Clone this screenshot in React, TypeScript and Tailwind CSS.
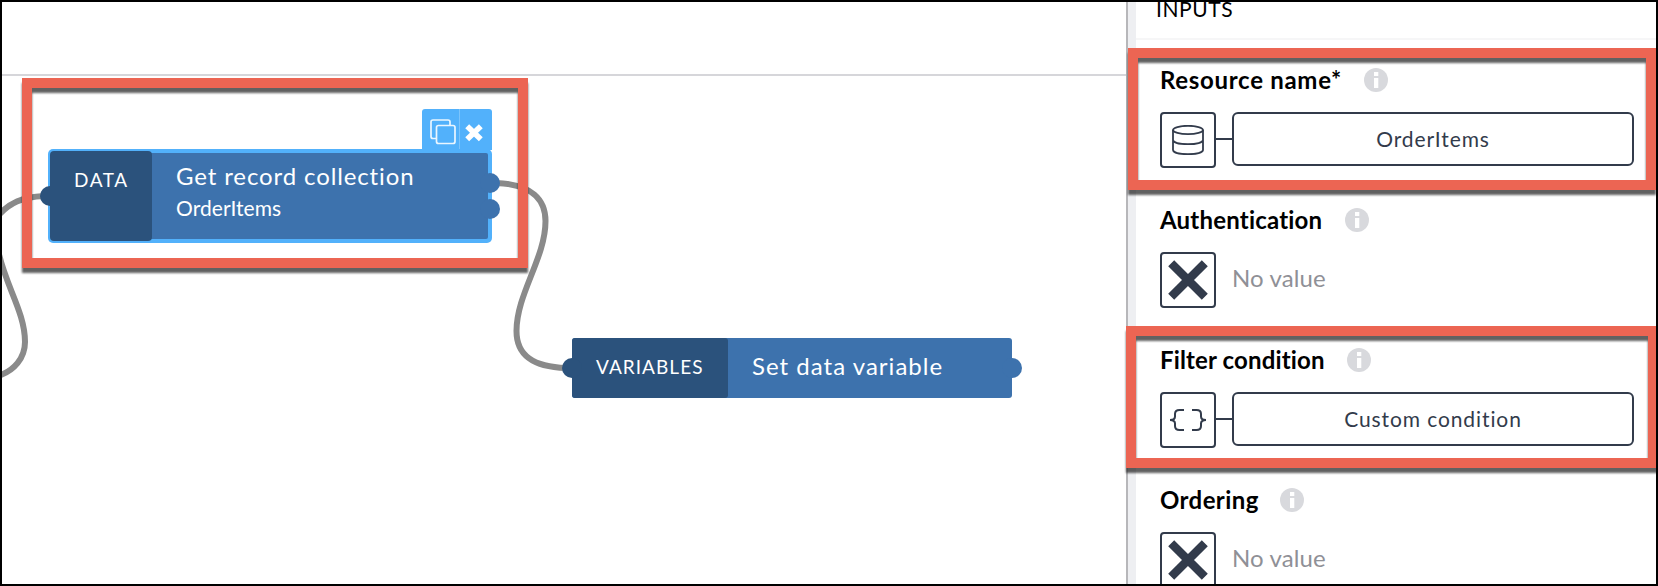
import type { ReactNode } from "react";

function Highlight({ className }: { className: string }) {
  return (
    <div
      className={`pointer-events-none absolute border-[10px] border-[#ec6553] [filter:drop-shadow(0_5.5px_1.3px_rgba(0,0,0,0.62))] ${className}`}
    />
  );
}

function Port({ className }: { className: string }) {
  return <span className={`absolute size-5 rounded-full ${className}`} />;
}

function InfoIcon() {
  return (
    <svg width="24" height="24" viewBox="0 0 24 24" className="shrink-0">
      <circle cx="12" cy="12" r="12" fill="#d8d9dd" />
      <path d="M10 4h4.300v4H10zM10 10h4.300v10H10z" fill="#fff" />
    </svg>
  );
}

function DatabaseIcon() {
  return (
    <svg width="32" height="30" viewBox="0 0 32 30" fill="none" stroke="#323b4b" strokeWidth="1.8">
      <ellipse cx="16" cy="5" rx="15" ry="4.2" />
      <path d="M1 5v20c0 2.500 6.500 4.200 15 4.200S31 27.500 31 25V5M1 15c0 2.500 6.500 4.200 15 4.200S31 17.500 31 15" />
    </svg>
  );
}

function BracesIcon() {
  return (
    <svg width="36" height="22" viewBox="0 0 36 22" fill="none" stroke="#323b4b" strokeWidth="2" className="shrink-0">
      <path d="M14 1h-4.500Q5 1 5 5v2.500Q5 11 0 11 5 11 5 14.500V17q0 4 4.500 4H14" />
      <path d="M22 1h4.500Q31 1 31 5v2.500Q31 11 36 11 31 11 31 14.500V17q0 4-4.500 4H22" />
    </svg>
  );
}

function CrossIcon() {
  return (
    <svg width="40" height="40" viewBox="0 0 40 40" stroke="#323b4b" strokeWidth="8.500">
      <path d="M3.200 3.200 36.800 36.800M36.800 3.200 3.200 36.800" />
    </svg>
  );
}

function CopyIcon() {
  return (
    <svg width="26" height="26" viewBox="0 0 26 26" fill="none" stroke="#eaf6ff" strokeWidth="1.700">
      <path d="M6 19.500H3q-2 0-2-2V3q0-2 2-2h15q2 0 2 2v3" />
      <rect x="6.500" y="6.500" width="18.500" height="18" rx="2" />
    </svg>
  );
}

function CloseIcon() {
  return (
    <svg width="18" height="18" viewBox="0 0 18 18" stroke="#fff" strokeWidth="5.600" strokeLinejoin="round">
      <path d="M2.200 2.200 15.800 15.200M15.800 2.200 2.200 15.200" />
    </svg>
  );
}

type FieldProps = { label: string; labelClass: string; icon: ReactNode; value?: string };

function Field({ label, labelClass, icon, value }: FieldProps) {
  return (
    <section className="h-[140px] shrink-0 pl-6 pr-[22px]">
      <div className="flex h-6 items-center">
        <h3 className={`whitespace-nowrap text-[24px] leading-6 font-bold text-black ${labelClass}`}>{label}</h3>
        <InfoIcon />
      </div>
      <div className="mt-5 flex">
        <div className="flex size-14 shrink-0 items-center justify-center rounded-[4px] border-2 border-[#323b4b]">
          {icon}
        </div>
        {value ? (
          <>
            <span className="mt-[26px] h-0.5 w-4 bg-[#323b4b]" />
            <button className="flex h-[54px] flex-1 items-center justify-center rounded-[6px] border-2 border-[#323b4b] bg-white pb-px text-[21px] tracking-[0.9px] text-[#323b4b]">
              {value}
            </button>
          </>
        ) : (
          <span className="ml-4 flex h-[51px] items-center text-[24px] tracking-[0.1px] text-[#8f9096]">No value</span>
        )}
      </div>
    </section>
  );
}

export default function App() {
  return (
    <div className="relative flex h-[586px] w-[1658px] overflow-hidden border-2 border-black bg-white font-['Lato',sans-serif]">
      <main className="relative w-[1124px] shrink-0">
        <div className="h-[74px] border-b-2 border-[#d6d6da]" />

        <svg className="absolute -left-0.5 -top-0.5" width="1126" height="584" fill="none" stroke="#8a8a8a" strokeWidth="6">
          <path d="M44 196C22 197 9 203-2 216" />
          <path d="M-2 250C5 285 25 312 25 342C25 358 14 371-2 376" />
          <path d="M496 183C532 184 545.500 200 545.500 221C545.500 258 516.500 294 516.500 331C516.500 356 534 367 566 368" />
        </svg>

        <div className="absolute left-[46px] top-[147px] flex h-[94px] w-[444px] rounded-[5px] bg-[#52b1fb] py-0.5 pl-0.5 pr-1 text-white">
          <div className="z-10 w-[102px] shrink-0 rounded-[4px] bg-[#2b527c] pl-6 pt-[17px] text-[19px] leading-6 tracking-[1.6px]">
            DATA
          </div>
          <div className="-ml-1 my-0.5 flex-1 rounded-r-[2px] bg-[#3d72ad] pl-7 pt-[7px]">
            <div className="text-[24px] leading-8 tracking-[0.88px]">Get record collection</div>
            <div className="mt-0.5 text-[21px] leading-7 tracking-[0.05px]">OrderItems</div>
          </div>
          <Port className="-left-2 top-[37px] bg-[#2b527c]" />
          <Port className="-right-2 top-[24px] bg-[#3d72ad]" />
          <Port className="-right-2 top-[50px] bg-[#3d72ad]" />
          <div className="absolute -top-10 right-0 flex h-[41px] w-[70px] rounded-t-[3px] bg-[#52b1fb]">
            <div className="h-10 w-[38px] border-r border-[#7cc4fc] pl-2 pt-[10px]">
              <CopyIcon />
            </div>
            <div className="pl-[5px] pt-[15px]">
              <CloseIcon />
            </div>
          </div>
        </div>

        <div className="absolute left-[570px] top-[336px] flex h-[60px] w-[440px] rounded-[3px] bg-[#3d72ad] text-white">
          <div className="flex w-[156px] shrink-0 items-center rounded-[3px] bg-[#2b527c] pb-px pl-6 text-[19px] tracking-[1.05px]">
            VARIABLES
          </div>
          <div className="flex items-center pb-[5px] pl-6 text-[24px] tracking-[1.02px]">Set data variable</div>
          <Port className="-left-2.5 top-5 bg-[#2b527c]" />
          <Port className="-right-2.5 top-5 bg-[#3d72ad]" />
        </div>
      </main>

      <aside className="flex flex-1 flex-col border-l-2 border-[#b7b7ba]">
        <div className="flex min-h-0 flex-1 flex-col overflow-hidden border-l-8 border-[#eeeff2]">
          <h2 className="h-[38px] shrink-0 border-b-2 border-[#f6f6f7] pl-5 text-[21px] leading-[14px] tracking-[0.6px] text-black">
            INPUTS
          </h2>
          <div className="flex flex-col pt-7">
            <Field label="Resource name*" labelClass="w-[204px] tracking-[0.7px]" icon={<DatabaseIcon />} value="OrderItems" />
            <Field label="Authentication" labelClass="w-[185px] tracking-[0.2px]" icon={<CrossIcon />} />
            <Field label="Filter condition" labelClass="w-[187px] tracking-[0.15px]" icon={<BracesIcon />} value="Custom condition" />
            <Field label="Ordering" labelClass="w-[120px] tracking-[0.4px]" icon={<CrossIcon />} />
          </div>
        </div>
      </aside>

      <Highlight className="left-5 top-[76px] h-[190px] w-[506px]" />
      <Highlight className="left-[1126px] top-[46px] h-[142px] w-[528px]" />
      <Highlight className="left-[1124px] top-[324px] h-[142px] w-[532px]" />
    </div>
  );
}
